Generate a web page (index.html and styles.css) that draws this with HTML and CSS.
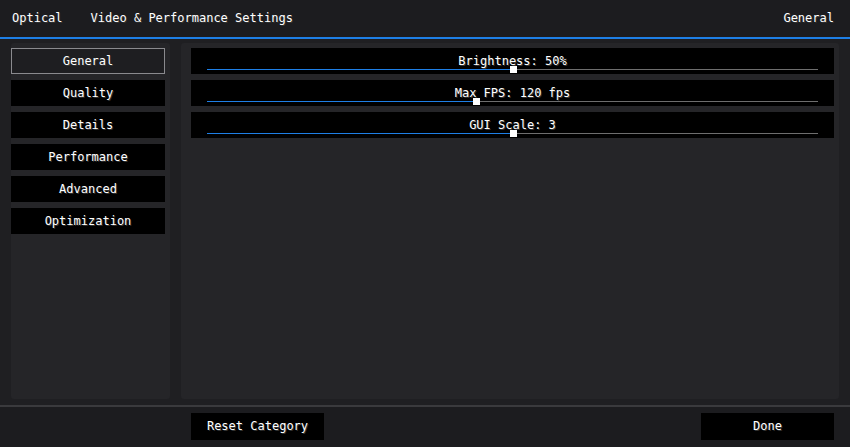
FILE: index.html
```html
<!DOCTYPE html>
<html lang="en">

<head>
    <meta charset="UTF-8">
    <title>Video &amp; Performance Settings</title>
    <link rel="stylesheet" href="styles.css">
</head>

<body>
    <div class="topbar">
        <span class="brand">Optical</span>
        <span class="title">Video &amp; Performance Settings</span>
        <span class="current">General</span>
    </div>

    <div class="content">
        <div class="panel sidebar">
            <div class="tab selected">General</div>
            <div class="tab">Quality</div>
            <div class="tab">Details</div>
            <div class="tab">Performance</div>
            <div class="tab">Advanced</div>
            <div class="tab">Optimization</div>
        </div>

        <div class="panel options">
            <div class="slider">
                <span class="label">Brightness: 50%</span>
                <div class="track">
                    <div class="fill" style="width: 50%"></div>
                    <div class="thumb" style="left: 50%"></div>
                </div>
            </div>
            <div class="slider">
                <span class="label">Max FPS: 120 fps</span>
                <div class="track">
                    <div class="fill" style="width: 44%"></div>
                    <div class="thumb" style="left: 44%"></div>
                </div>
            </div>
            <div class="slider">
                <span class="label">GUI Scale: 3</span>
                <div class="track">
                    <div class="fill" style="width: 50%"></div>
                    <div class="thumb" style="left: 50%"></div>
                </div>
            </div>
        </div>
    </div>

    <div class="footer">
        <div class="button">Reset Category</div>
        <div class="button">Done</div>
    </div>
</body>

</html>
```

FILE: styles.css
```css
* {
    box-sizing: border-box;
}

body {
    margin: 0;
    width: 850px;
    height: 447px;
    display: flex;
    flex-direction: column;
    background-color: #1f1f22;
    color: #ffffff;
    font-family: "DejaVu Sans Mono", "Liberation Mono", monospace;
    font-size: 12px;
    text-shadow: 1px 1px 0 #333333;
    overflow: hidden;
}

/* top title bar */
.topbar {
    height: 39px;
    display: flex;
    align-items: center;
    padding: 0 16px 2px 12px;
    background-color: #1c1c1f;
    border-bottom: 2px solid #1e7fe6;
}

.title {
    margin-left: 28px;
}

.current {
    margin-left: auto;
}

/* the two panels */
.content {
    flex: 1;
    display: flex;
    gap: 11px;
    padding: 4px 11px 6px 11px;
}

.panel {
    background-color: #252528;
    border-radius: 3px;
}

.sidebar {
    width: 159px;
    display: flex;
    flex-direction: column;
    gap: 6px;
    padding: 5px 5px 0 0;
}

.tab {
    height: 26px;
    line-height: 26px;
    text-align: center;
    background-color: #000000;
}

.tab.selected {
    background-color: #1e1e21;
    border: 1px solid #8a8a8e;
    line-height: 24px;
}

.options {
    flex: 1;
    display: flex;
    flex-direction: column;
    gap: 6px;
    padding: 5px 5px 0 10px;
}

.slider {
    position: relative;
    height: 26px;
    padding-top: 5px;
    line-height: 16px;
    text-align: center;
    background-color: #000000;
}

.track {
    position: absolute;
    left: 16px;
    right: 16px;
    top: 21px;
    height: 1px;
    background-color: #6e6e6e;
}

.fill {
    height: 1px;
    background-color: #1e7fe6;
}

.thumb {
    position: absolute;
    top: -3px;
    width: 7px;
    height: 7px;
    margin-left: -3px;
    background-color: #ffffff;
}

/* bottom bar */
.footer {
    height: 42px;
    display: flex;
    justify-content: space-between;
    padding: 6px 16px 0 191px;
    background-color: #1c1c1f;
    border-top: 2px solid #3a3a3d;
}

.button {
    width: 133px;
    height: 27px;
    line-height: 27px;
    text-align: center;
    background-color: #000000;
}
```
